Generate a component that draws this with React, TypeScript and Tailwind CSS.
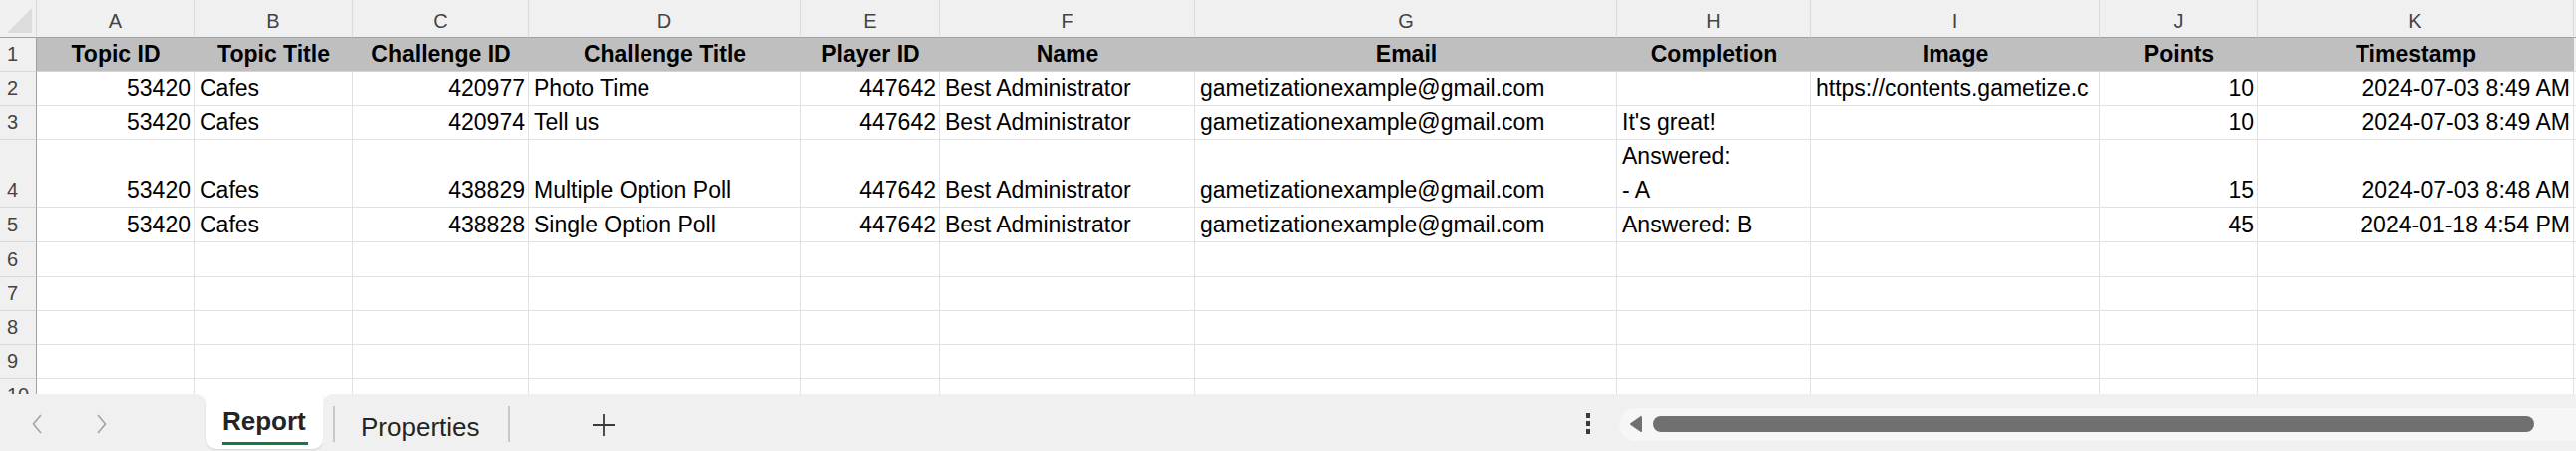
import React from "react";

type Align = "l" | "r";

const gridCols =
  "grid grid-cols-[37px_158px_159px_176px_273px_139px_256px_423px_194px_290px_158px_317px_2px]";

const letters = ["A", "B", "C", "D", "E", "F", "G", "H", "I", "J", "K"];

const headers = [
  "Topic ID",
  "Topic Title",
  "Challenge ID",
  "Challenge Title",
  "Player ID",
  "Name",
  "Email",
  "Completion",
  "Image",
  "Points",
  "Timestamp",
];

const aligns: Align[] = ["r", "l", "r", "l", "r", "l", "l", "l", "l", "r", "r"];

const email = "gametizationexample@gmail.com";

const rows: { h: string; cells: string[] }[] = [
  {
    h: "h-[34px]",
    cells: [
      "53420",
      "Cafes",
      "420977",
      "Photo Time",
      "447642",
      "Best Administrator",
      email,
      "",
      "https://contents.gametize.c",
      "10",
      "2024-07-03 8:49 AM",
    ],
  },
  {
    h: "h-[34px]",
    cells: [
      "53420",
      "Cafes",
      "420974",
      "Tell us",
      "447642",
      "Best Administrator",
      email,
      "It's great!",
      "",
      "10",
      "2024-07-03 8:49 AM",
    ],
  },
  {
    h: "h-[68px]",
    cells: [
      "53420",
      "Cafes",
      "438829",
      "Multiple Option Poll",
      "447642",
      "Best Administrator",
      email,
      "Answered:\n- A",
      "",
      "15",
      "2024-07-03 8:48 AM",
    ],
  },
  {
    h: "h-[35px]",
    cells: [
      "53420",
      "Cafes",
      "438828",
      "Single Option Poll",
      "447642",
      "Best Administrator",
      email,
      "Answered: B",
      "",
      "45",
      "2024-01-18 4:54 PM",
    ],
  },
];

const emptyRows = ["h-[35px]", "h-[34px]", "h-[34px]", "h-[34px]", "h-[34px]"];

function RowNum({ n }: { n: number }) {
  return (
    <div className="bg-[#f0f0f0] border-r border-b border-r-[#a0a0a0] border-b-[#d9d9d9] flex items-end pl-[7px] text-[20px] leading-[34px] text-[#444] overflow-hidden">
      {n}
    </div>
  );
}

function Cell({ text, align }: { text: string; align: Align }) {
  return (
    <div
      className={
        "min-w-0 border-r border-b border-[#e1e1e1] flex items-end overflow-hidden text-[23px] leading-[34px] text-black " +
        (align === "r" ? "justify-end pr-[3px]" : "pl-[5px]")
      }
    >
      {text && (
        <span className="block min-w-0 max-w-full overflow-hidden whitespace-pre">
          {text}
        </span>
      )}
    </div>
  );
}

function Sheet() {
  return (
    <div className="h-[395px] overflow-hidden">
      {/* column letters */}
      <div className={`${gridCols} h-[38px]`}>
        <div className="bg-[#f0f0f0] border-r border-b border-r-[#d9d9d9] border-b-[#a0a0a0] flex items-center justify-center">
          <svg width="28" height="28" viewBox="0 0 28 28" className="ml-[4px] mt-[4px]">
            <path d="M1 26 L26 1 L26 26 Z" fill="#dcdcdc" />
          </svg>
        </div>
        {letters.map((l) => (
          <div
            key={l}
            className="bg-[#f0f0f0] border-r border-b border-r-[#dadada] border-b-[#a0a0a0] text-center pt-[11px] text-[20px] leading-[20px] text-[#444]"
          >
            {l}
          </div>
        ))}
        <div className="bg-[#f0f0f0] border-b border-b-[#a0a0a0]" />
      </div>

      {/* header row */}
      <div className={`${gridCols} h-[34px]`}>
        <RowNum n={1} />
        {headers.map((t) => (
          <div
            key={t}
            className="bg-[#bfbfbf] border-b border-[#d4d4d4] flex items-end justify-center font-bold text-[23px] leading-[34px] text-black whitespace-nowrap overflow-hidden"
          >
            {t}
          </div>
        ))}
        <div className="bg-[#f0f0f0] border-b border-[#e1e1e1]" />
      </div>

      {rows.map((r, i) => (
        <div key={i} className={`${gridCols} ${r.h}`}>
          <RowNum n={i + 2} />
          {r.cells.map((c, j) => (
            <Cell key={j} text={c} align={aligns[j]} />
          ))}
          <div className="border-b border-[#e1e1e1]" />
        </div>
      ))}

      {emptyRows.map((h, i) => (
        <div key={i} className={`${gridCols} ${h}`}>
          <RowNum n={i + 6} />
          {letters.map((l) => (
            <Cell key={l} text="" align="l" />
          ))}
          <div className="border-b border-[#e1e1e1]" />
        </div>
      ))}
    </div>
  );
}

function TabBar() {
  return (
    <div className="flex h-[57px] bg-white">
      <div className="w-[206px] bg-[#f0f0f0] rounded-tr-[10px] flex items-center">
        <svg width="14" height="22" viewBox="0 0 14 22" className="ml-[30px] mt-[3px]">
          <path d="M11 2 L3.5 11 L11 20" fill="none" stroke="#a3a3a3" strokeWidth="1.6" />
        </svg>
        <svg width="14" height="22" viewBox="0 0 14 22" className="ml-[51px] mt-[3px]">
          <path d="M3 2 L10.5 11 L3 20" fill="none" stroke="#a3a3a3" strokeWidth="1.6" />
        </svg>
      </div>

      <div className="w-[118px] bg-[#f0f0f0]">
        <div className="h-[55px] bg-white rounded-b-[10px] shadow-[0_1px_2px_rgba(0,0,0,0.12)] pt-[14px] pl-[17px]">
          <div className="text-[26px] leading-[26px] font-bold text-[#242424]">Report</div>
          <div className="mt-[8px] w-[86px] h-[3px] bg-[#107c41]" />
        </div>
      </div>

      <div className="flex-1 bg-[#f0f0f0] rounded-tl-[10px] flex items-center">
        <div className="ml-[10px] w-[2px] h-[36px] bg-[#c8c8c8] mt-[3px]" />
        <div className="ml-[26px] mt-[9px] text-[26px] leading-[26px] text-[#242424]">Properties</div>
        <div className="ml-[28px] w-[2px] h-[36px] bg-[#c8c8c8] mt-[3px]" />
        <svg width="24" height="24" viewBox="0 0 24 24" className="ml-[82px] mt-[5px]">
          <path d="M12 1 V23 M1 12 H23" stroke="#3a3a3a" strokeWidth="1.8" />
        </svg>

        <div className="ml-auto flex items-center w-[994px] mt-[3px]">
          <svg width="6" height="22" viewBox="0 0 6 22" className="ml-[1px]">
            <rect x="1" y="0" width="4" height="5" fill="#3a3a3a" />
            <rect x="1" y="8" width="4" height="5" fill="#3a3a3a" />
            <rect x="1" y="16" width="4" height="5" fill="#3a3a3a" />
          </svg>
          <div className="ml-[28px] flex-1 h-[33px] bg-[#f6f6f6] rounded-l-full flex items-center">
            <svg width="14" height="18" viewBox="0 0 14 18" className="ml-[10px]">
              <path
                d="M2 9 L12 2 L12 16 Z"
                fill="#707070"
                stroke="#707070"
                strokeWidth="2"
                strokeLinejoin="round"
              />
            </svg>
            <div className="ml-[10px] w-[883px] h-[16px] bg-[#707070] rounded-full" />
          </div>
        </div>
      </div>
    </div>
  );
}

export default function App() {
  return (
    <div className="w-[2582px] h-[452px] overflow-hidden bg-white font-['Liberation_Sans',Arial,sans-serif]">
      <Sheet />
      <TabBar />
    </div>
  );
}
